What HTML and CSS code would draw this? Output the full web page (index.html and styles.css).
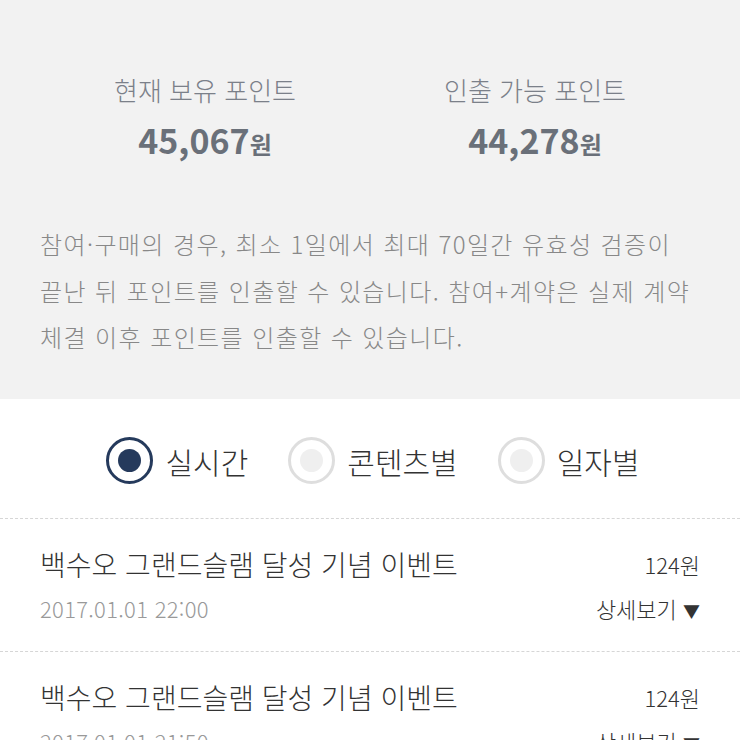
FILE: index.html
```html
<!DOCTYPE html>
<html lang="ko">
<head>
    <meta charset="UTF-8">
    <meta name="viewport" content="width=device-width, initial-scale=1.0">
    <title>포인트</title>
    <link rel="stylesheet" href="styles.css">
</head>
<body>
    <div class="summary">
        <div class="points">
            <div class="point">
                <p class="point-label">현재 보유 포인트</p>
                <p class="point-value">45,067<span class="unit">원</span></p>
            </div>
            <div class="point">
                <p class="point-label">인출 가능 포인트</p>
                <p class="point-value">44,278<span class="unit">원</span></p>
            </div>
        </div>
        <p class="notice">참여·구매의 경우, 최소 1일에서 최대 70일간 유효성 검증이 끝난 뒤 포인트를 인출할 수 있습니다. 참여+계약은 실제 계약 체결 이후 포인트를 인출할 수 있습니다.</p>
    </div>

    <div class="tabs">
        <label class="tab">
            <span class="radio checked"></span>
            <span>실시간</span>
        </label>
        <label class="tab">
            <span class="radio"></span>
            <span>콘텐츠별</span>
        </label>
        <label class="tab">
            <span class="radio"></span>
            <span>일자별</span>
        </label>
    </div>

    <ul class="history">
        <li class="item">
            <div class="item-row">
                <span class="item-title">백수오 그랜드슬램 달성 기념 이벤트</span>
                <span class="item-amount">124원</span>
            </div>
            <div class="item-row">
                <span class="item-date">2017.01.01 22:00</span>
                <span class="item-more">상세보기 <span class="arrow">▼</span></span>
            </div>
        </li>
        <li class="item">
            <div class="item-row">
                <span class="item-title">백수오 그랜드슬램 달성 기념 이벤트</span>
                <span class="item-amount">124원</span>
            </div>
            <div class="item-row">
                <span class="item-date">2017.01.01 21:50</span>
                <span class="item-more">상세보기 <span class="arrow">▼</span></span>
            </div>
        </li>
    </ul>
</body>
</html>
```

FILE: styles.css
```css
* {
    margin: 0;
    padding: 0;
    box-sizing: border-box;
}

body {
    font-family: "Noto Sans CJK KR", "Noto Sans", sans-serif;
    background-color: #ffffff;
    color: #333;
}

.summary {
    background-color: #f2f2f2;
    padding: 70px 40px 0;
    height: 399px;
}

.points {
    display: grid;
    grid-template-columns: 1fr 1fr;
    text-align: center;
}

.point-label {
    font-size: 26px;
    line-height: 40px;
    color: #7b8089;
    font-weight: 300;
}

.point-value {
    font-size: 34px;
    line-height: 56px;
    font-weight: bold;
    color: #6a7079;
    margin-top: 2px;
}

.point-value .unit {
    font-size: 24px;
}

.notice {
    margin-top: 49px;
    font-size: 24px;
    line-height: 46.5px;
    color: #888;
    font-weight: 300;
    letter-spacing: 1.4px;
    word-break: keep-all;
}

.tabs {
    display: flex;
    justify-content: center;
    gap: 40px;
    padding: 38px 0 34px 6px;
    border-bottom: 1px dashed #d6d6d6;
}

.tab {
    display: flex;
    align-items: center;
    gap: 12px;
    font-size: 30px;
    color: #333;
    font-weight: 300;
}

.radio {
    width: 47px;
    height: 47px;
    border-radius: 50%;
    border: 3px solid #dedede;
    display: flex;
    align-items: center;
    justify-content: center;
}

.radio::after {
    content: "";
    width: 23px;
    height: 23px;
    border-radius: 50%;
    background-color: #efefef;
}

.radio.checked {
    border-color: #253a5c;
}

.radio.checked::after {
    background-color: #253a5c;
}

.history {
    list-style: none;
}

.item {
    padding: 26px 40px 24px;
    border-bottom: 1px dashed #d6d6d6;
}

.item-row {
    display: flex;
    justify-content: space-between;
    align-items: center;
}

.item-title {
    font-size: 28px;
    line-height: 38px;
    color: #333;
    font-weight: 300;
}

.item-amount {
    font-size: 22px;
    color: #333;
    font-weight: 300;
}

.item-date {
    margin-top: 6px;
    font-size: 22px;
    line-height: 38px;
    color: #999;
    font-weight: 300;
    letter-spacing: 0.3px;
}

.item-more {
    margin-top: 6px;
    font-size: 22px;
    color: #333;
    font-weight: 300;
}

.item-more .arrow {
    font-size: 17px;
}
```
